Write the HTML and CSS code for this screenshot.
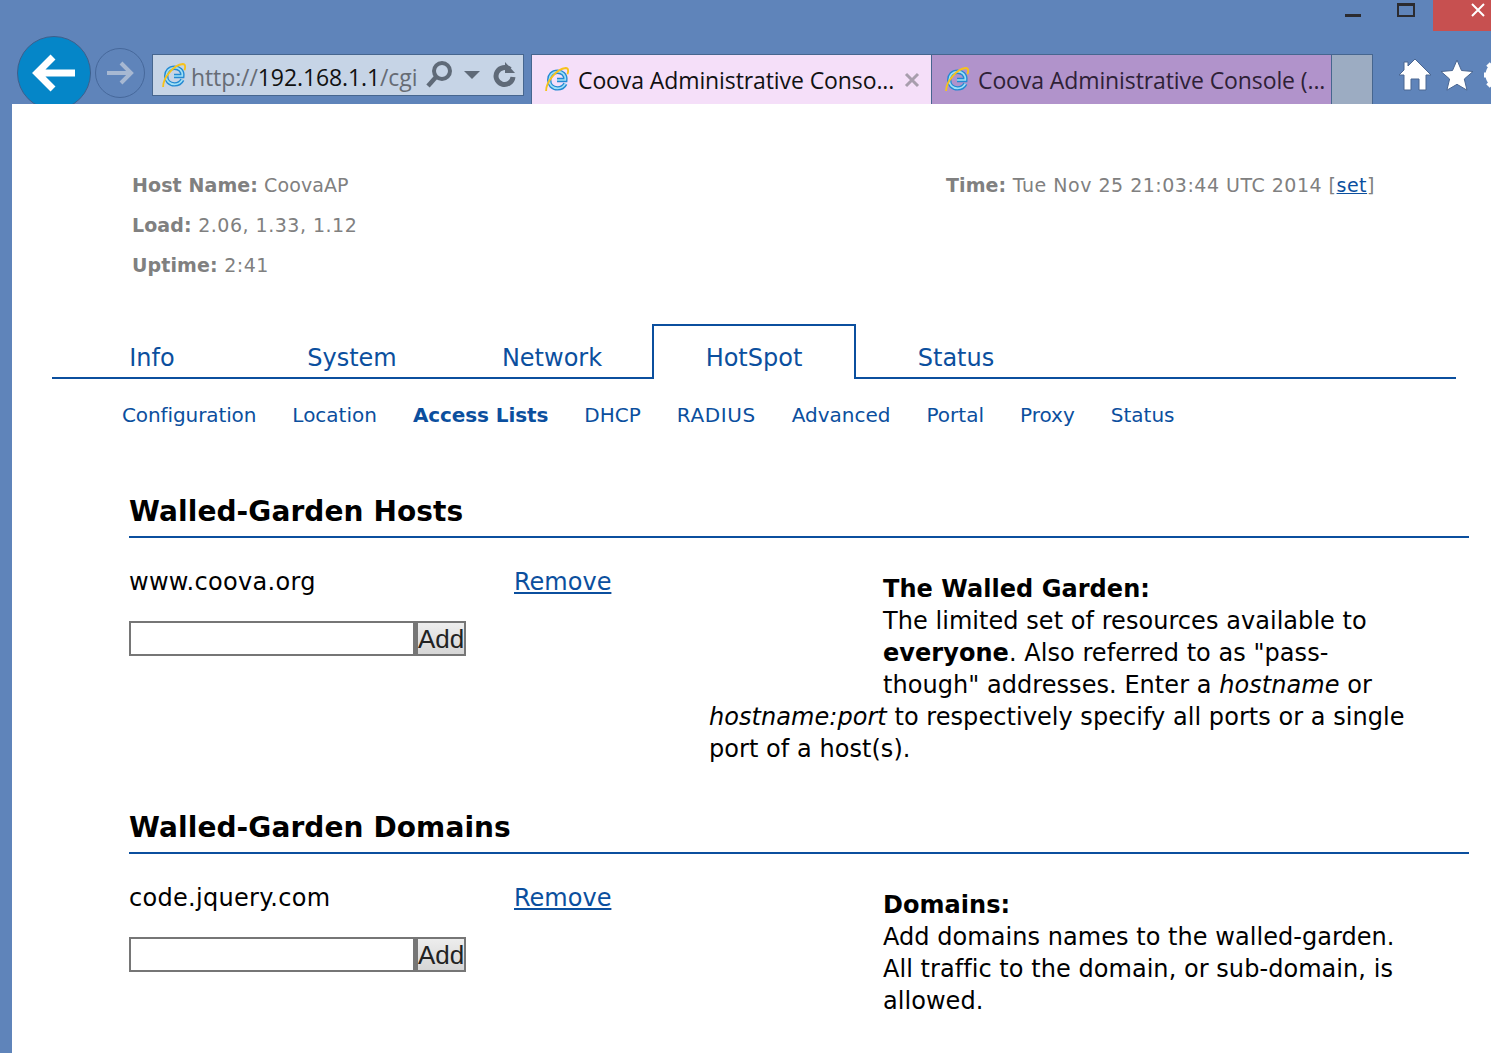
FILE: index.html
```html
<!DOCTYPE html>
<html lang="en">
<head>
    <meta charset="UTF-8">
    <title>Coova Administrative Console</title>
    <link rel="stylesheet" href="styles.css">
</head>
<body>
    <svg class="defs" width="0" height="0">
        <symbol id="ie-logo" viewBox="0 0 24 24">
            <path d="M12.500 12.500h8c.5-5-3-8-7.500-8-5 0-8 3.500-8 8s3 8 8 8c3.500 0 6-1.500 7.500-4.500" fill="none" stroke="#2389d2" stroke-width="4.200"/>
            <path d="M12.500 12.500h8c.5-5-3-8-7.500-8-5 0-8 3.500-8 8s3 8 8 8c3.500 0 6-1.500 7.500-4.500" fill="none" stroke="#9fe0f6" stroke-width="1.600"/>
            <path d="M2 23C2 14 12 2 21 1c2.500 0 2.500 3 1.500 6" fill="none" stroke="#f6c21c" stroke-width="1.800"/>
        </symbol>
    </svg>

    <div id="browser">
        <div id="window-controls">
            <span class="win-min"></span>
            <span class="win-max"></span>
            <span class="win-close">
                <svg width="14" height="14" viewBox="0 0 14 14"><path d="M1 1l12 12M13 1L1 13" stroke="#fff" stroke-width="2"/></svg>
            </span>
        </div>
        <div id="toolbar">
            <button class="nav-back">
                <svg width="46" height="40" viewBox="0 0 46 40"><path d="M22 4L6 20l16 16M8 20h36" fill="none" stroke="#fff" stroke-width="7"/></svg>
            </button>
            <button class="nav-forward">
                <svg width="30" height="26" viewBox="0 0 30 26"><path d="M16 3l10 10-10 10M26 13H2" fill="none" stroke="#a7b8d2" stroke-width="4"/></svg>
            </button>
            <div class="address">
                <svg class="favicon"><use href="#ie-logo"/></svg>
                <span class="url"><span class="url-dim">http://</span>192.168.1.1<span class="url-dim">/cgi</span></span>
                <svg class="addr-search" width="30" height="30" viewBox="0 0 30 30"><circle cx="17" cy="11" r="8" fill="none" stroke="#5f6a78" stroke-width="4"/><path d="M11 17l-8 9" stroke="#5f6a78" stroke-width="4.500"/></svg>
                <span class="addr-drop"></span>
                <svg class="addr-refresh" width="26" height="28" viewBox="0 0 26 28"><path d="M19 8.500a8.500 8.500 0 1 0 3 7.500" fill="none" stroke="#5f6a78" stroke-width="5"/><path d="M14 1v11h10z" fill="#5f6a78"/></svg>
            </div>
            <div class="tab tab-active">
                <svg class="favicon"><use href="#ie-logo"/></svg>
                <span class="tab-title">Coova Administrative Conso...</span>
                <span class="tab-close">
                    <svg width="16" height="16" viewBox="0 0 16 16"><path d="M2 2l12 12M14 2L2 14" stroke="#a89ead" stroke-width="3"/></svg>
                </span>
            </div>
            <div class="tab tab-other">
                <svg class="favicon"><use href="#ie-logo"/></svg>
                <span class="tab-title">Coova Administrative Console (...</span>
            </div>
            <div class="tab-new"></div>
            <div class="tools">
                <svg width="34" height="34" viewBox="0 0 34 34"><path d="M17 1l16 16h-5v15h-7V21h-8v11H6V17H1l5-5V4h4v4z" fill="#fff" stroke="#4a6691"/></svg>
                <svg width="34" height="34" viewBox="0 0 34 34"><path d="M17 2l4.500 10.500 11.500 1-8.700 7.500 2.700 11.200L17 26.300 6.900 32.200l2.700-11.200L1 13.500l11.500-1z" fill="#fff" stroke="#4a6691"/></svg>
                <svg width="34" height="34" viewBox="0 0 34 34"><circle cx="17" cy="17" r="10" fill="none" stroke="#fff" stroke-width="7"/><path d="M17 2v30M2 17h30M6 6l22 22M28 6L6 28" stroke="#fff" stroke-width="5"/><circle cx="17" cy="17" r="5" fill="#5f84ba"/></svg>
            </div>
        </div>
    </div>

    <div id="page">
        <div class="status-bar">
            <div>
                <p class="host"><b>Host Name:</b> CoovaAP</p>
                <p><b>Load:</b> 2.06, 1.33, 1.12</p>
                <p><b>Uptime:</b> 2:41</p>
            </div>
            <p><b>Time:</b> Tue Nov 25 21:03:44 UTC 2014 [<a href="#">set</a>]</p>
        </div>

        <div class="main-tabs">
            <a href="#">Info</a>
            <a href="#">System</a>
            <a href="#">Network</a>
            <a href="#" class="active">HotSpot</a>
            <a href="#">Status</a>
        </div>

        <div class="sub-tabs">
            <a href="#" class="narrow">Configuration</a>
            <a href="#">Location</a>
            <a href="#" class="active">Access Lists</a>
            <a href="#">DHCP</a>
            <a href="#" class="wide">RADIUS</a>
            <a href="#">Advanced</a>
            <a href="#">Portal</a>
            <a href="#">Proxy</a>
            <a href="#">Status</a>
        </div>

        <div class="section">
            <h2>Walled-Garden Hosts</h2>
            <div class="section-body">
                <div class="entries">
                    <div class="entry">
                        <span class="entry-name">www.coova.org</span>
                        <a href="#">Remove</a>
                    </div>
                    <form class="add-form">
                        <input type="text">
                        <button type="button">Add</button>
                    </form>
                </div>
                <div class="help">
                    <div class="help-spacer"></div>
                    <strong>The Walled Garden:</strong><br>
                    The limited set of resources available to <strong>everyone</strong>. Also referred to as "pass-though" addresses. Enter a <em>hostname</em> or <em>hostname:port</em> to respectively specify all ports or a single port of a host(s).
                </div>
            </div>
        </div>

        <div class="section">
            <h2>Walled-Garden Domains</h2>
            <div class="section-body">
                <div class="entries">
                    <div class="entry">
                        <span class="entry-name">code.jquery.com</span>
                        <a href="#">Remove</a>
                    </div>
                    <form class="add-form">
                        <input type="text">
                        <button type="button">Add</button>
                    </form>
                </div>
                <div class="help">
                    <div class="help-spacer"></div>
                    <strong>Domains:</strong><br>
                    Add domains names to the walled-garden. All traffic to the domain, or sub-domain, is allowed.
                </div>
            </div>
        </div>
    </div>
</body>
</html>
```

FILE: styles.css
```css
html, body {
    margin: 0;
    height: 100%;
    overflow: hidden;
}

body {
    background: #5f84ba;
    display: flex;
    flex-direction: column;
    font-family: "DejaVu Sans", sans-serif;
    font-variant-ligatures: none;
}

.defs {
    position: absolute;
}

#browser {
    height: 104px;
    flex-shrink: 0;
    overflow: hidden;
    font-family: "Open Sans", "Noto Sans", sans-serif;
}

#window-controls {
    height: 54px;
    display: flex;
    justify-content: flex-end;
    align-items: flex-start;
}

.win-min {
    width: 16px;
    height: 3px;
    margin: 14px 36px 0 0;
    background: #2b2b30;
}

.win-max {
    width: 18px;
    height: 14px;
    box-sizing: border-box;
    margin: 3px 18px 0 0;
    border: 2px solid #2b2b30;
    border-top-width: 3px;
}

.win-close {
    width: 58px;
    height: 31px;
    background: #c75050;
    display: flex;
    justify-content: flex-end;
    padding-right: 6px;
    box-sizing: border-box;
    padding-top: 3px;
}

.win-close svg {
    display: block;
}

#toolbar {
    height: 50px;
    display: flex;
    align-items: flex-start;
    padding-left: 17px;
}

#toolbar button {
    padding: 0;
    display: flex;
    justify-content: center;
    align-items: center;
    border-radius: 50%;
    flex-shrink: 0;
}

.nav-back {
    width: 74px;
    height: 74px;
    margin-top: -18px;
    background: #0586c8;
    border: 1px solid #3e5f8c;
}

.nav-forward {
    width: 50px;
    height: 50px;
    margin: -6px 0 0 4px;
    background: transparent;
    border: 1px solid #46689b;
}

.address {
    width: 372px;
    height: 42px;
    box-sizing: border-box;
    margin: 0 7px 0 7px;
    padding: 0 6px 0 8px;
    background: #c6d4e6;
    border: 1px solid #46668f;
    display: flex;
    align-items: center;
    flex-shrink: 0;
}

.favicon {
    width: 25px;
    height: 25px;
    flex-shrink: 0;
}

.url {
    width: 230px;
    margin-left: 5px;
    padding-top: 3px;
    font-size: 23px;
    letter-spacing: -0.1px;
    color: #111;
    white-space: nowrap;
    flex-shrink: 0;
}

.url-dim {
    color: #666c75;
}

.addr-search {
    flex-shrink: 0;
    margin-left: 4px;
}

.addr-refresh {
    flex-shrink: 0;
}

.addr-drop {
    width: 0;
    height: 0;
    margin-left: 9px;
    margin-right: 11px;
    border-left: 8px solid transparent;
    border-right: 8px solid transparent;
    border-top: 8px solid #5f6a78;
}

.tab {
    width: 400px;
    height: 50px;
    box-sizing: border-box;
    padding: 0 11px 0 12px;
    border: 1px solid #46668f;
    border-bottom: 0;
    display: flex;
    align-items: center;
    flex-shrink: 0;
    font-size: 23px;
    letter-spacing: -0.1px;
    white-space: nowrap;
}

.tab-title {
    margin-left: 9px;
}

.tab-active {
    background: #f5dff9;
    color: #111;
    border-right: 0;
}

.tab-other {
    background: #b193cb;
    color: #2e2136;
    border-right: 0;
}

.tab-close {
    margin-left: auto;
    display: flex;
}

.tab-new {
    width: 42px;
    height: 50px;
    box-sizing: border-box;
    background: #9cacc2;
    border: 1px solid #46668f;
    border-bottom: 0;
    flex-shrink: 0;
}

.tools {
    display: flex;
    gap: 8px;
    margin: 4px 0 0 25px;
    flex-shrink: 0;
}

#page {
    flex-grow: 1;
    margin-left: 12px;
    background: #fff;
    overflow: hidden;
}

a {
    color: #0b4f9e;
    text-decoration: none;
}

.status-bar {
    display: flex;
    justify-content: space-between;
    padding: 70px 116px 0 120px;
    color: #808080;
    font-size: 19px;
    letter-spacing: 0.5px;
}

.status-bar b {
    letter-spacing: 0.1px;
}

.status-bar .host {
    letter-spacing: 0.1px;
}

.status-bar p {
    margin: 0 0 18px;
    line-height: 22px;
}

.status-bar a {
    text-decoration: underline;
}

.main-tabs {
    display: flex;
    height: 54px;
    margin: 29px 35px 0 40px;
    border-bottom: 2px solid #0b4f9e;
    font-size: 24px;
}

.main-tabs a {
    width: 200px;
    height: 55px;
    box-sizing: border-box;
    padding-top: 18px;
    text-align: center;
    border: 2px solid transparent;
    border-bottom: 0;
    margin-top: 1px;
}

.main-tabs a.active {
    width: 204px;
    background: #fff;
    border-color: #0b4f9e;
}

.sub-tabs {
    display: flex;
    gap: 36px;
    padding: 24px 0 0 110px;
    font-size: 20px;
}

.sub-tabs a.active {
    font-weight: bold;
    letter-spacing: -0.1px;
}

.sub-tabs a.narrow {
    letter-spacing: -0.1px;
}

.sub-tabs a.wide {
    letter-spacing: 0.6px;
}

.section {
    margin: 66px 22px 0 117px;
}

.section h2 {
    margin: 0;
    padding-bottom: 5px;
    border-bottom: 2px solid #0b4f9e;
    font-size: 28px;
    letter-spacing: 0.1px;
    line-height: 38px;
    color: #000;
}

.section-body {
    display: flex;
    height: 205px;
    font-size: 24px;
    color: #000;
}

.entries {
    width: 580px;
    flex-shrink: 0;
    padding-top: 29px;
}

.entry {
    display: flex;
    line-height: 30px;
}

.entry-name {
    width: 385px;
    letter-spacing: 0.3px;
}

.entry a {
    text-decoration: underline;
}

.add-form {
    display: flex;
    margin-top: 24px;
}

.add-form input {
    width: 286px;
    height: 35px;
    box-sizing: border-box;
    padding: 0;
    border: 2px solid #767676;
    background: #fff;
}

.add-form button {
    width: 51px;
    height: 35px;
    box-sizing: border-box;
    padding: 0;
    border: 2px solid #767676;
    border-left-width: 3px;
    background: linear-gradient(#ededed, #d6d6d6);
    font-family: "Liberation Sans", sans-serif;
    font-size: 26px;
    line-height: 30px;
    color: #222;
}

.help {
    width: 700px;
    padding-top: 35px;
    line-height: 32px;
    letter-spacing: 0.05px;
}

.help-spacer {
    float: left;
    width: 174px;
    height: 120px;
}
```
